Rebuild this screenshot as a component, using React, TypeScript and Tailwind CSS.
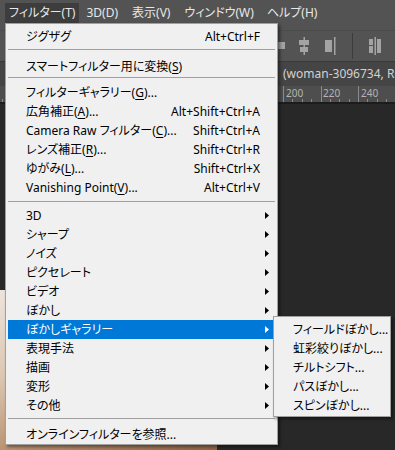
import React from 'react';

type Row = {
  label: React.ReactNode;
  shortcut?: string;
  arrow?: boolean;
  active?: boolean;
  className?: string;
};

const U = ({ c }: { c: string }) => <span className="underline underline-offset-2">{c}</span>;

const Arrow = ({ white }: { white?: boolean }) => (
  <svg width="4" height="7" viewBox="0 0 4 7" className="shrink-0">
    <path d="M0 0 L4 3.5 L0 7 Z" fill={white ? '#ffffff' : '#000000'} />
  </svg>
);

const MenuRow = ({ label, shortcut, arrow, active, className = '' }: Row) => (
  <div
    className={`ml-[2px] mr-[4px] h-[19px] flex items-center pl-[18px] ${arrow ? 'pr-[4px]' : 'pr-[13px]'} ${
      active ? 'bg-[#0078d7] text-white' : 'text-black'
    } ${className}`}
  >
    <span className="flex-1 whitespace-nowrap">{label}</span>
    {shortcut && <span className="whitespace-nowrap">{shortcut}</span>}
    {arrow && <Arrow white={active} />}
  </div>
);

const Sep = ({ className = '' }: { className?: string }) => (
  <div className={`mx-[2px] h-px bg-[#a0a0a0] ${className}`} />
);

const toolRows: Row[] = [
  { label: <>フィルターギャラリー(<U c="G" />)...</> },
  { label: <>広角補正(<U c="A" />)...</>, shortcut: 'Alt+Shift+Ctrl+A' },
  { label: <>Camera Raw フィルター(<U c="C" />)...</>, shortcut: 'Shift+Ctrl+A' },
  { label: <>レンズ補正(<U c="R" />)...</>, shortcut: 'Shift+Ctrl+R' },
  { label: <>ゆがみ(<U c="L" />)...</>, shortcut: 'Shift+Ctrl+X' },
  { label: <>Vanishing Point(<U c="V" />)...</>, shortcut: 'Alt+Ctrl+V' },
];

const subRows: Row[] = [
  { label: '3D', arrow: true },
  { label: 'シャープ', arrow: true },
  { label: 'ノイズ', arrow: true },
  { label: 'ピクセレート', arrow: true },
  { label: 'ビデオ', arrow: true },
  { label: 'ぼかし', arrow: true },
  { label: 'ぼかしギャラリー', arrow: true, active: true },
  { label: '表現手法', arrow: true },
  { label: '描画', arrow: true },
  { label: '変形', arrow: true },
  { label: 'その他', arrow: true },
];

const blurItems = ['フィールドぼかし...', '虹彩絞りぼかし...', 'チルトシフト...', 'パスぼかし...', 'スピンぼかし...'];

const MenuBar = () => (
  <div className="h-[30px] bg-[#535353] flex items-start pt-[3px] pl-[5px] text-[12px] text-[#e8e8e8]">
    <div className="h-[20px] px-[4px] flex items-center bg-[#3d3d3d]">フィルター(T)</div>
    <div className="h-[20px] px-[7px] flex items-center">3D(D)</div>
    <div className="h-[20px] px-[7px] flex items-center">表示(V)</div>
    <div className="h-[20px] px-[7px] flex items-center">ウィンドウ(W)</div>
    <div className="h-[20px] px-[6px] flex items-center">ヘルプ(H)</div>
  </div>
);

const Toolbar = () => (
  <div className="h-[31px] bg-[#535353] border-t border-[#4b4b4b] flex items-center pl-[265px]">
    <svg width="130" height="26" viewBox="0 0 130 26" className="text-[#a3a3a3] block">
      <g fill="currentColor">
        {/* partial icon at the menu edge */}
        <rect x="13" y="9" width="7" height="7" />
        {/* align horizontal centres */}
        <rect x="38.5" y="4" width="1.5" height="18" />
        <rect x="34" y="7" width="10" height="5" />
        <rect x="35" y="14" width="8" height="5" />
        {/* align right edges */}
        <rect x="69" y="4" width="1.5" height="18" />
        <rect x="60" y="7" width="7" height="12" />
        {/* separator */}
        <rect x="87" y="0" width="1" height="26" fill="#3c3c3c" />
        {/* distribute */}
        <rect x="104" y="6" width="4" height="6" />
        <rect x="104" y="13" width="4" height="7" />
        <rect x="109.5" y="4" width="1.5" height="18" />
        <rect x="112" y="6" width="4" height="14" />
      </g>
    </svg>
  </div>
);

const TabRow = () => (
  <div className="h-[25px] bg-[#454545] border-t border-[#3a3a3a] flex items-center pl-[283px] text-[12px] text-[#d2d2d2] whitespace-nowrap overflow-hidden">
    (woman-3096734, RGB/8)
  </div>
);

const Ruler = () => {
  const ticks: number[] = [];
  for (let x = 283 - 37.5 * 8; x < 400; x += 9.375) ticks.push(x);
  const majors = [283, 320.5, 358];
  return (
    <div className="h-[16px] bg-[#4e4e4e] relative">
      <svg width="395" height="16" viewBox="0 0 395 16" className="block">
        {ticks.map((x, i) => (
          <rect key={i} x={Math.round(x)} y="13" width="1" height="3" fill="#8a8a8a" />
        ))}
        {majors.map((x) => (
          <rect key={x} x={Math.round(x)} y="0" width="1" height="16" fill="#8a8a8a" />
        ))}
      </svg>
      <span className="absolute top-0 left-[286px] text-[10px] leading-[14px] text-[#b4b4b4]">200</span>
      <span className="absolute top-0 left-[323px] text-[10px] leading-[14px] text-[#b4b4b4]">220</span>
      <span className="absolute top-0 left-[361px] text-[10px] leading-[14px] text-[#b4b4b4]">240</span>
    </div>
  );
};

export default function App() {
  return (
    <div className="relative w-[395px] h-[450px] overflow-hidden bg-[#282828] font-['Noto_Sans','Noto_Sans_CJK_JP',sans-serif] [font-feature-settings:'palt'] select-none">
      <MenuBar />
      <Toolbar />
      <TabRow />
      <Ruler />
      <div className="h-[2px] bg-[#1c1c1c]" />
      <div className="pt-[186px]">
        <div className="w-[217px] h-[170px] bg-[linear-gradient(160deg,#ece4dc_0%,#dcc7b3_35%,#b48a68_70%,#8a5e40_100%)]" />
      </div>

      {/* dropdown menu */}
      <div className="absolute left-[5px] top-[23px] w-[273px] bg-[#f0f0f0] border border-[#a0a0a0] shadow-[2px_2px_3px_rgba(0,0,0,0.45)] text-[12px]">
        <div className="pt-[3px]">
          <MenuRow label="ジグザグ" shortcut="Alt+Ctrl+F" />
        </div>
        <Sep className="mt-[3px]" />
        <MenuRow label={<>スマートフィルター用に変換(<U c="S" />)</>} className="mt-[7px]" />
        <Sep className="mt-[1px]" />
        <div className="mt-[5px]">
          {toolRows.map((r, i) => (
            <MenuRow key={i} {...r} />
          ))}
        </div>
        <Sep className="mt-[4px]" />
        <div className="mt-[4px]">
          {subRows.map((r, i) => (
            <MenuRow key={i} {...r} />
          ))}
        </div>
        <Sep className="mt-[3px]" />
        <MenuRow label="オンラインフィルターを参照..." className="mt-[6px]" />
      </div>

      {/* blur gallery submenu */}
      <div className="absolute left-[273px] top-[316px] w-[118px] bg-[#f0f0f0] border border-[#a0a0a0] shadow-[2px_2px_3px_rgba(0,0,0,0.45)] text-[12px] pt-[3px] pb-[1px]">
        {blurItems.map((t) => (
          <div key={t} className="mx-[2px] h-[19px] flex items-center pl-[17px] text-black whitespace-nowrap">
            {t}
          </div>
        ))}
      </div>
    </div>
  );
}
